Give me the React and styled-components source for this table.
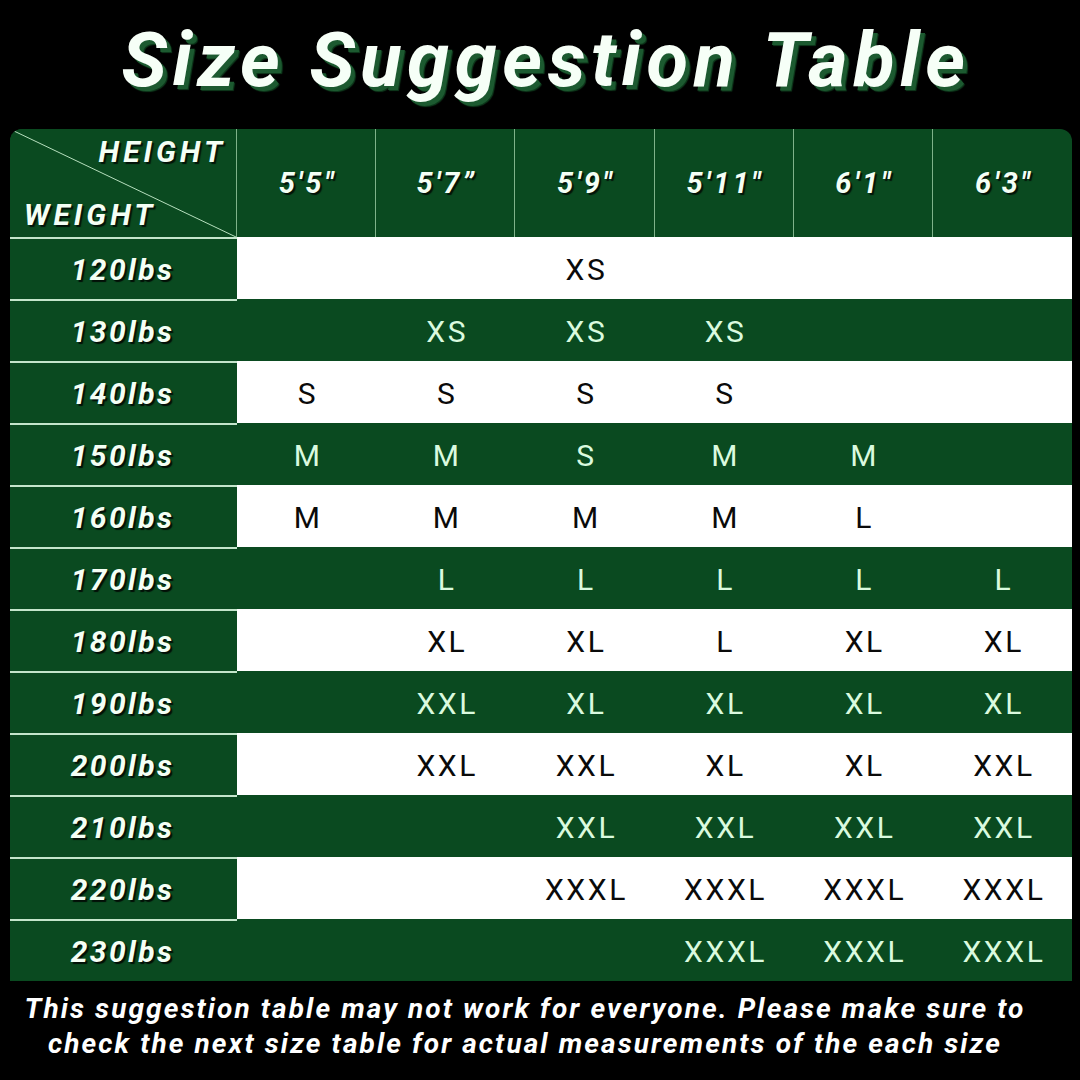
import React from 'react';
import styled, { createGlobalStyle } from 'styled-components';

const COLORS = {
  page: '#000000',
  green: '#0a4a20',
  line: '#c4e6cb',
  divider: '#7fb28a',
  paleText: '#dafadf',
  label: '#f4fff5',
};

const HEIGHTS = ['5\'5"', '5\'7\u201D', '5\'9"', '5\'11"', '6\'1"', '6\'3"'];

const ROWS = [
  ['120lbs', ['', '', 'XS', '', '', '']],
  ['130lbs', ['', 'XS', 'XS', 'XS', '', '']],
  ['140lbs', ['S', 'S', 'S', 'S', '', '']],
  ['150lbs', ['M', 'M', 'S', 'M', 'M', '']],
  ['160lbs', ['M', 'M', 'M', 'M', 'L', '']],
  ['170lbs', ['', 'L', 'L', 'L', 'L', 'L']],
  ['180lbs', ['', 'XL', 'XL', 'L', 'XL', 'XL']],
  ['190lbs', ['', 'XXL', 'XL', 'XL', 'XL', 'XL']],
  ['200lbs', ['', 'XXL', 'XXL', 'XL', 'XL', 'XXL']],
  ['210lbs', ['', '', 'XXL', 'XXL', 'XXL', 'XXL']],
  ['220lbs', ['', '', 'XXXL', 'XXXL', 'XXXL', 'XXXL']],
  ['230lbs', ['', '', '', 'XXXL', 'XXXL', 'XXXL']],
];

const GlobalStyle = createGlobalStyle`
  html, body {
    margin: 0;
    padding: 0;
    background: ${COLORS.page};
  }
  body {
    font-family: Roboto, "Liberation Sans", sans-serif;
  }
`;

const Page = styled.div`
  width: 1080px;
  height: 1080px;
  background: ${COLORS.page};
  display: flex;
  flex-direction: column;
  align-items: center;
  overflow: hidden;
`;

const Title = styled.h1`
  margin: 0;
  height: 129px;
  display: flex;
  align-items: center;
  justify-content: center;
  padding: 0 0 10px 12px;
  box-sizing: border-box;
  font-family: Roboto, "Liberation Sans", sans-serif;
  font-size: 76px;
  font-weight: 700;
  font-style: italic;
  letter-spacing: 5.5px;
  color: #f6fff7;
  text-shadow: 4px 4px 0 #1c5a30, 5px 5px 1px #0e3a1c;
`;

const Table = styled.div`
  width: 1062px;
  margin-left: 2px;
  display: grid;
  grid-template-columns: 227px repeat(6, 1fr);
  background: ${COLORS.green};
  border-radius: 12px 12px 0 0;
  overflow: hidden;
`;

const Corner = styled.div`
  position: relative;
  height: 108px;
  background: ${COLORS.green};
  border-right: 1px solid ${COLORS.divider};
`;

const Diagonal = styled.svg`
  position: absolute;
  inset: 0;
  width: 100%;
  height: 100%;
`;

const CornerLabel = styled.span`
  position: absolute;
  font-size: 30px;
  font-weight: 700;
  font-style: italic;
  letter-spacing: 4px;
  color: ${COLORS.label};
  text-shadow: 2px 2px 1px rgba(0, 0, 0, 0.75);
  ${({ $top }) => ($top ? 'top: 5px; right: 10px;' : 'bottom: 5px; left: 14px;')}
`;

const HeadCell = styled.div`
  height: 108px;
  display: flex;
  align-items: center;
  justify-content: center;
  padding-left: 3px;
  border-right: ${({ $last }) => ($last ? 'none' : `1px solid ${COLORS.divider}`)};
  font-size: 29px;
  font-weight: 700;
  font-style: italic;
  letter-spacing: 3px;
  color: ${COLORS.label};
  text-shadow: 2px 2px 1px rgba(0, 0, 0, 0.75);
`;

const LabelCell = styled.div`
  height: 60px;
  border-top: 2px solid ${COLORS.line};
  display: flex;
  align-items: center;
  justify-content: center;
  padding-right: 2px;
  font-size: 30px;
  font-weight: 700;
  font-style: italic;
  letter-spacing: 2.4px;
  color: ${COLORS.label};
  background: ${COLORS.green};
  text-shadow: 2px 2px 1px rgba(0, 0, 0, 0.8);
`;

const SizeCell = styled.div`
  height: 60px;
  border-top: 2px solid ${({ $light }) => ($light ? '#ffffff' : COLORS.green)};
  display: flex;
  align-items: center;
  justify-content: center;
  padding-left: 3px;
  font-size: 30px;
  font-weight: 400;
  letter-spacing: 2.6px;
  background: ${({ $light }) => ($light ? '#ffffff' : COLORS.green)};
  color: ${({ $light }) => ($light ? '#0a0a0a' : COLORS.paleText)};
`;

const Note = styled.p`
  margin: 10px 0 0;
  padding-right: 30px;
  text-align: center;
  font-size: 28px;
  line-height: 35px;
  font-weight: 700;
  font-style: italic;
  letter-spacing: 2.1px;
  color: #ffffff;
`;

export default function App() {
  return (
    <Page>
      <GlobalStyle />
      <Title>Size Suggestion Table</Title>
      <Table>
        <Corner>
          <Diagonal viewBox="0 0 227 108" preserveAspectRatio="none">
            <line x1="4" y1="2" x2="227" y2="108" stroke="#b8e0bf" strokeWidth="1" />
          </Diagonal>
          <CornerLabel $top>HEIGHT</CornerLabel>
          <CornerLabel>WEIGHT</CornerLabel>
        </Corner>
        {HEIGHTS.map((h, i) => (
          <HeadCell key={h} $last={i === HEIGHTS.length - 1}>{h}</HeadCell>
        ))}
        {ROWS.map(([weight, sizes], r) => (
          <React.Fragment key={weight}>
            <LabelCell>{weight}</LabelCell>
            {sizes.map((s, c) => (
              <SizeCell key={c} $light={r % 2 === 0}>{s}</SizeCell>
            ))}
          </React.Fragment>
        ))}
      </Table>
      <Note>
        This suggestion table may not work for everyone. Please make sure to
        <br />
        check the next size table for actual measurements of the each size
      </Note>
    </Page>
  );
}
